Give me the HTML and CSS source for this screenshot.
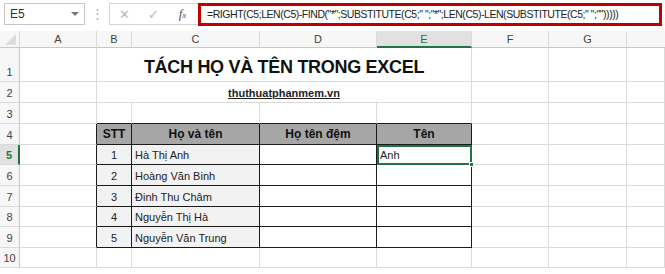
FILE: index.html
```html
<!DOCTYPE html>
<html lang="vi">
<head>
    <meta charset="UTF-8">
    <meta name="viewport" content="width=device-width, initial-scale=1.0">
    <title>Tách họ và tên trong Excel</title>
    <link rel="stylesheet" href="styles.css">
</head>
<body>
    <div class="toolbar">
        <div class="namebox">
            <span>E5</span>
            <span class="caret"></span>
        </div>
        <div class="dots">&#8942;</div>
        <div class="fbuttons">
            <span class="fb cancel">&#10005;</span>
            <span class="fb enter">&#10003;</span>
            <span class="fb fx"><i>f</i><small>x</small></span>
        </div>
        <div class="formula">=RIGHT(C5;LEN(C5)-FIND("*";SUBSTITUTE(C5;" ";"*";LEN(C5)-LEN(SUBSTITUTE(C5;" ";"")))))</div>
    </div>

    <div class="sheet">
        <!-- column headers -->
        <div class="colhead corner"><span class="tri"></span></div>
        <div class="colhead">A</div>
        <div class="colhead">B</div>
        <div class="colhead">C</div>
        <div class="colhead">D</div>
        <div class="colhead active">E</div>
        <div class="colhead">F</div>
        <div class="colhead">G</div>
        <div class="colhead last"></div>

        <!-- row 1: B1:E1 merged -->
        <div class="rowhead">1</div>
        <div class="cell"></div>
        <div class="cell title">TÁCH HỌ VÀ TÊN TRONG EXCEL</div>
        <div class="cell"></div>
        <div class="cell"></div>
        <div class="cell"></div>

        <!-- row 2: B2:E2 merged -->
        <div class="rowhead">2</div>
        <div class="cell"></div>
        <div class="cell link"><u>thuthuatphanmem.vn</u></div>
        <div class="cell"></div>
        <div class="cell"></div>
        <div class="cell"></div>

        <!-- row 3 -->
        <div class="rowhead">3</div>
        <div class="cell"></div>
        <div class="cell tb-top"></div>
        <div class="cell tb-top"></div>
        <div class="cell tb-top"></div>
        <div class="cell tb-top"></div>
        <div class="cell"></div>
        <div class="cell"></div>
        <div class="cell"></div>

        <!-- row 4 -->
        <div class="rowhead">4</div>
        <div class="cell tb-left"></div>
        <div class="cell th">STT</div>
        <div class="cell th">Họ và tên</div>
        <div class="cell th">Họ tên đệm</div>
        <div class="cell th">Tên</div>
        <div class="cell"></div>
        <div class="cell"></div>
        <div class="cell"></div>

        <!-- row 5 -->
        <div class="rowhead active">5</div>
        <div class="cell tb-left"></div>
        <div class="cell td num">1</div>
        <div class="cell td name">Hà Thị Anh</div>
        <div class="cell td"></div>
        <div class="cell td selected">Anh<span class="handle"></span></div>
        <div class="cell"></div>
        <div class="cell"></div>
        <div class="cell"></div>

        <!-- row 6 -->
        <div class="rowhead">6</div>
        <div class="cell tb-left"></div>
        <div class="cell td num">2</div>
        <div class="cell td name">Hoàng Văn Binh</div>
        <div class="cell td"></div>
        <div class="cell td"></div>
        <div class="cell"></div>
        <div class="cell"></div>
        <div class="cell"></div>

        <!-- row 7 -->
        <div class="rowhead">7</div>
        <div class="cell tb-left"></div>
        <div class="cell td num">3</div>
        <div class="cell td name">Đinh Thu Châm</div>
        <div class="cell td"></div>
        <div class="cell td"></div>
        <div class="cell"></div>
        <div class="cell"></div>
        <div class="cell"></div>

        <!-- row 8 -->
        <div class="rowhead">8</div>
        <div class="cell tb-left"></div>
        <div class="cell td num">4</div>
        <div class="cell td name">Nguyễn Thị Hà</div>
        <div class="cell td"></div>
        <div class="cell td"></div>
        <div class="cell"></div>
        <div class="cell"></div>
        <div class="cell"></div>

        <!-- row 9 -->
        <div class="rowhead">9</div>
        <div class="cell tb-left"></div>
        <div class="cell td num">5</div>
        <div class="cell td name">Nguyễn Văn Trung</div>
        <div class="cell td"></div>
        <div class="cell td"></div>
        <div class="cell"></div>
        <div class="cell"></div>
        <div class="cell"></div>

        <!-- row 10 -->
        <div class="rowhead">10</div>
        <div class="cell"></div>
        <div class="cell"></div>
        <div class="cell"></div>
        <div class="cell"></div>
        <div class="cell"></div>
        <div class="cell"></div>
        <div class="cell"></div>
        <div class="cell"></div>
    </div>
</body>
</html>
```

FILE: styles.css
```css
:root {
    --grid-line: #dadada;
    --head-bg: #f7f7f7;
    --head-text: #444;
    --excel-green: #217346;
    --border-dark: #1a1a1a;
}

* {
    margin: 0;
    padding: 0;
    box-sizing: border-box;
}

body {
    width: 665px;
    height: 274px;
    overflow: hidden;
    background: #fff;
    font-family: 'Liberation Sans', Arial, sans-serif;
    color: #222;
}

/* Formula bar */
.toolbar {
    height: 31px;
    display: flex;
    align-items: flex-start;
    padding-top: 3px;
    padding-left: 4px;
}

.namebox {
    width: 81px;
    height: 22px;
    border: 1px solid #c6c6c6;
    display: flex;
    align-items: center;
    justify-content: space-between;
    padding: 0 5px 0 5px;
    font-size: 12px;
    color: #333;
}

.caret {
    width: 0;
    height: 0;
    border-left: 4px solid transparent;
    border-right: 4px solid transparent;
    border-top: 4px solid #777;
}

.dots {
    width: 24px;
    text-align: center;
    color: #b5b5b5;
    font-size: 13px;
    line-height: 22px;
}

.fbuttons {
    width: 89px;
    height: 22px;
    border: 1px solid #d6d6d6;
    border-right: none;
    display: flex;
    align-items: center;
}

.fb {
    width: 29px;
    text-align: center;
    color: #b8b8b8;
    font-size: 13px;
}

.fx {
    color: #555;
    font-family: 'Liberation Serif', serif;
    font-size: 13px;
}

.fx small {
    font-size: 9px;
    font-style: italic;
}

.formula {
    flex: 1;
    height: 23px;
    margin-right: 3px;
    border: 3px solid #c00000;
    font-size: 10.5px;
    letter-spacing: -0.45px;
    line-height: 17px;
    padding-left: 6px;
    color: #222;
    white-space: nowrap;
    overflow: hidden;
}

/* Sheet grid */
.sheet {
    display: grid;
    grid-template-columns: 20px 77px 35px 128px 117px 95px 77px 78px 1fr;
    grid-template-rows: 17px 34px 21px 21px 21px 20px 21px 21px 20px 21px 20px 10px;
    font-size: 11px;
}

.colhead {
    background: var(--head-bg);
    color: var(--head-text);
    text-align: center;
    line-height: 16px;
    border-right: 1px solid var(--grid-line);
    border-bottom: 1px solid #c8c8c8;
}

.colhead.active {
    background: #e1e1e1;
    color: var(--excel-green);
    border-bottom: 2px solid var(--excel-green);
}

.colhead.last {
    border-right: none;
}

.corner {
    position: relative;
}

.tri {
    position: absolute;
    right: 3px;
    bottom: 2px;
    width: 0;
    height: 0;
    border-left: 11px solid transparent;
    border-bottom: 11px solid #dcdcdc;
}

.rowhead {
    grid-column: 1;
    background: var(--head-bg);
    color: var(--head-text);
    display: flex;
    align-items: flex-end;
    justify-content: center;
    padding-bottom: 3px;
    border-right: 1px solid #c8c8c8;
    border-bottom: 1px solid var(--grid-line);
}

.rowhead.active {
    background: #e1e1e1;
    color: var(--excel-green);
    font-weight: bold;
    border-right: 2px solid var(--excel-green);
}

.cell {
    border-right: 1px solid var(--grid-line);
    border-bottom: 1px solid var(--grid-line);
    display: flex;
    align-items: flex-end;
    padding: 0 3px 3px;
    white-space: nowrap;
}

.title {
    grid-column: span 4;
    justify-content: center;
    font-size: 18px;
    letter-spacing: -0.3px;
    font-weight: bold;
    color: #111;
    padding-bottom: 3px;
}

.link {
    grid-column: span 4;
    justify-content: center;
    font-weight: bold;
    font-size: 11px;
}

/* Table B4:E9 */
.tb-top {
    border-bottom-color: var(--border-dark);
}

.tb-left {
    border-right-color: var(--border-dark);
}

.th {
    background: #a6a6a6;
    font-weight: bold;
    font-size: 12px;
    justify-content: center;
    border-right-color: var(--border-dark);
    border-bottom-color: var(--border-dark);
    color: #111;
}

.td {
    border-right-color: var(--border-dark);
    border-bottom-color: var(--border-dark);
}

.num,
.name {
    background: #f2f2f2;
}

.num {
    justify-content: center;
}

.selected {
    position: relative;
    outline: 2px solid var(--excel-green);
    outline-offset: -2px;
    padding-left: 3px;
}

.handle {
    position: absolute;
    right: -3px;
    bottom: -3px;
    width: 5px;
    height: 5px;
    background: var(--excel-green);
    border: 1px solid #fff;
}
```
